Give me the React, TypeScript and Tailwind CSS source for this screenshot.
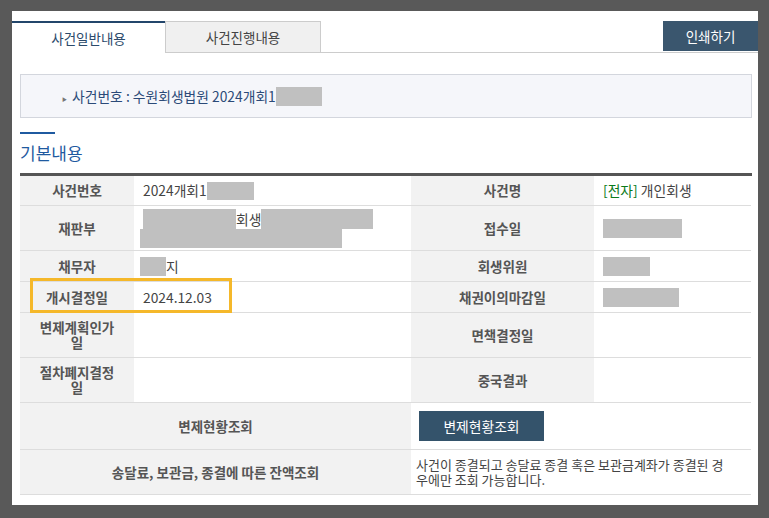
import React from "react";

const font = { fontFamily: '"Noto Sans CJK KR", "Noto Sans", sans-serif' };

function Mask({ w, h = 19 }: { w: number; h?: number }) {
  return <span className="inline-block bg-[#c0c0c0] align-middle" style={{ width: w, height: h }} />;
}

function Label({ children, className = "" }: { children: React.ReactNode; className?: string }) {
  return (
    <div className={`flex items-center justify-center bg-[#f2f2f2] text-center text-[13.5px] font-bold leading-[15px] text-[#555] ${className}`}>
      {children}
    </div>
  );
}

function Value({ children, className = "" }: { children?: React.ReactNode; className?: string }) {
  return <div className={`flex items-center pl-[9px] text-[13.8px] text-[#444] ${className}`}>{children}</div>;
}

export default function App() {
  return (
    <div className="h-[518px] w-[769px] overflow-hidden bg-[#595959] pl-[12px] pt-[11px]" style={font}>
      <div className="relative h-[494px] w-[746px] bg-white pt-[10px]">
        <div className="flex h-[32px] items-stretch border-b border-[#cccccc]">
          <div className="-mb-px flex w-[153px] items-center justify-center border-t-2 border-[#23466b] bg-white text-[13.5px] text-[#2b4a6b]">
            사건일반내용
          </div>
          <div className="flex w-[156px] items-center justify-center border border-b-0 border-[#cccccc] bg-[#f0f0f0] text-[13.5px] text-[#444]">
            사건진행내용
          </div>
          <div className="ml-auto flex h-[30px] w-[95px] items-center justify-center bg-[#3a566e] text-[13.5px] text-white">
            인쇄하기
          </div>
        </div>

        <div className="pl-[8px] pr-[6px]">
          <div className="mt-[21px] flex h-[44px] items-center border border-[#d3d6dd] bg-[#f5f6fa] pl-[41px] text-[13.8px] text-[#2b4a78]">
            <span className="mr-[5px] mt-[5px] text-[5px] text-[#777]">▶</span>
            <span>사건번호 : 수원회생법원 2024개회1</span>
            <Mask w={46} />
          </div>

          <div className="mt-[14px] h-[2px] w-[35px] bg-[#1f5aa0]" />
          <div className="mt-[7px] text-[17px] leading-[24px] text-[#1f5aa0]">기본내용</div>

          <div className="mt-[8px] border-t-[3px] border-[#555]">
            <div className="grid grid-cols-[114px_277px_183px_157px]">
              <Label className="h-[30px] border-b border-[#dddddd]">사건번호</Label>
              <Value className="h-[30px] border-b border-[#dddddd]">
                2024개회1<Mask w={47} h={18} />
              </Value>
              <Label className="h-[30px] border-b border-[#dddddd]">사건명</Label>
              <Value className="h-[30px] border-b border-[#dddddd]">
                <span className="text-[#0a7a1a]">[전자]</span>&nbsp;개인회생
              </Value>

              <Label className="h-[45px] border-b border-[#dddddd]">재판부</Label>
              <div className="flex h-[45px] flex-col justify-center border-b border-[#dddddd] pl-[6px] text-[13.8px] text-[#444]">
                <div className="flex h-[20px] items-center">
                  <span className="ml-[3px] inline-block h-[20px] w-[93px] bg-[#c0c0c0]" />
                  <span className="leading-[20px]">회생</span>
                  <span className="inline-block h-[20px] w-[112px] bg-[#c0c0c0]" />
                </div>
                <span className="inline-block h-[19px] w-[202px] bg-[#c0c0c0]" />
              </div>
              <Label className="h-[45px] border-b border-[#dddddd]">접수일</Label>
              <Value className="h-[45px] border-b border-[#dddddd]">
                <Mask w={79} />
              </Value>

              <Label className="h-[31px] border-b border-[#dddddd]">채무자</Label>
              <Value className="h-[31px] border-b border-[#dddddd] !pl-[6px]">
                <Mask w={26} />지
              </Value>
              <Label className="h-[31px] border-b border-[#dddddd]">회생위원</Label>
              <Value className="h-[31px] border-b border-[#dddddd]">
                <Mask w={47} />
              </Value>

              <Label className="h-[31px] border-b border-[#dddddd]">개시결정일</Label>
              <Value className="h-[31px] border-b border-[#dddddd]">2024.12.03</Value>
              <Label className="h-[31px] border-b border-[#dddddd]">채권이의마감일</Label>
              <Value className="h-[31px] border-b border-[#dddddd]">
                <Mask w={76} />
              </Value>

              <Label className="h-[45px] border-b border-[#dddddd]">
                <div>
                  <div>변제계획인가</div>
                  <div>일</div>
                </div>
              </Label>
              <Value className="h-[45px] border-b border-[#dddddd]" />
              <Label className="h-[45px] border-b border-[#dddddd]">면책결정일</Label>
              <Value className="h-[45px] border-b border-[#dddddd]" />

              <Label className="h-[45px] border-b border-[#dddddd]">
                <div>
                  <div>절차폐지결정</div>
                  <div>일</div>
                </div>
              </Label>
              <Value className="h-[45px] border-b border-[#dddddd]" />
              <Label className="h-[45px] border-b border-[#dddddd]">중국결과</Label>
              <Value className="h-[45px] border-b border-[#dddddd]" />

              <Label className="col-span-2 h-[47px] border-b border-[#dddddd]">변제현황조회</Label>
              <div className="col-span-2 flex h-[47px] items-center border-b border-[#dddddd] pl-[8px]">
                <div className="flex h-[30px] w-[125px] items-center justify-center bg-[#34536b] text-[13.8px] text-white">
                  변제현황조회
                </div>
              </div>

              <Label className="col-span-2 h-[45px] border-b border-[#dddddd]">송달료, 보관금, 종결에 따른 잔액조회</Label>
              <div className="col-span-2 flex h-[45px] items-center border-b border-[#dddddd] pl-[5px] text-[13px] leading-[15px] text-[#444]">
                <div>
                  <div>사건이 종결되고 송달료 종결 혹은 보관금계좌가 종결된 경</div>
                  <div>우에만 조회 가능합니다.</div>
                </div>
              </div>
            </div>
          </div>
        </div>

        <div className="pointer-events-none absolute left-[18px] top-[267px] h-[35px] w-[202px] border-[3px] border-[#f5b82a]" />
      </div>
    </div>
  );
}
